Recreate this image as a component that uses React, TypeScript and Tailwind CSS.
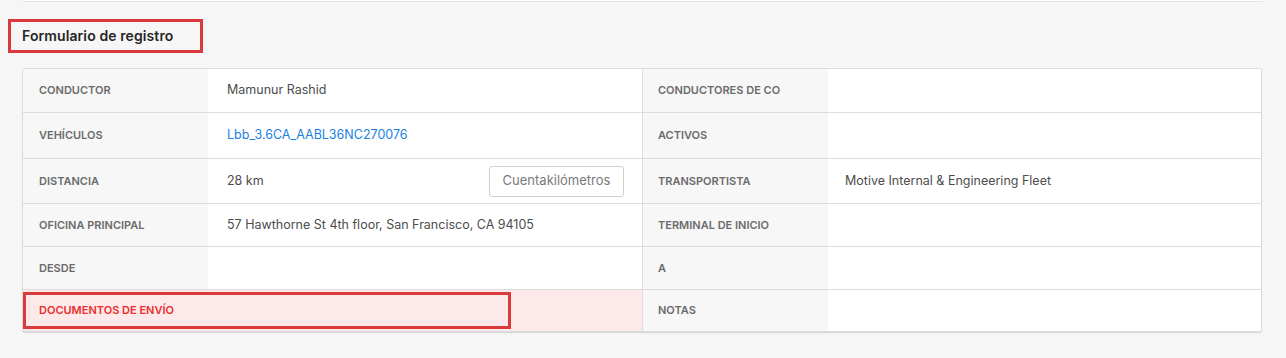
import React from "react";

type Row = {
  h: string;
  l1: string;
  v1?: React.ReactNode;
  l2: string;
  v2?: React.ReactNode;
  danger?: boolean;
};

const rows: Row[] = [
  { h: "h-[44px]", l1: "Conductor", v1: "Mamunur Rashid", l2: "Conductores de co" },
  {
    h: "h-[46px]",
    l1: "Vehículos",
    v1: <span className="text-[#1a7fe2]">Lbb_3.6CA_AABL36NC270076</span>,
    l2: "Activos",
  },
  {
    h: "h-[45px]",
    l1: "Distancia",
    v1: "28 km",
    l2: "Transportista",
    v2: "Motive Internal & Engineering Fleet",
  },
  {
    h: "h-[43px]",
    l1: "Oficina principal",
    v1: "57 Hawthorne St 4th floor, San Francisco, CA 94105",
    l2: "Terminal de inicio",
  },
  { h: "h-[43px]", l1: "Desde", l2: "A" },
  { h: "h-[41px]", l1: "Documentos de envío", l2: "Notas", danger: true },
];

export default function App() {
  return (
    <div
      className="w-[1286px] h-[358px] bg-[#f6f6f6] overflow-hidden"
      style={{ fontFamily: "Inter, 'Noto Sans', sans-serif" }}
    >
      <div className="mx-[22px] w-[1240px] h-[2px] bg-white border-b border-[#e2e2e2]" />
      <div className="mt-[17px] ml-[8px] w-[195px] h-[34px] border-[3px] border-[#d93a3c] flex items-center pl-[11px]">
        <span className="text-[14px] font-semibold text-[#262626] tracking-[0.1px] -mt-[1px]">
          Formulario de registro
        </span>
      </div>
      <div className="mt-[15px] ml-[22px] w-[1240px] border border-[#dcdcdc] rounded-[3px] bg-white shadow-[0_1px_1px_rgba(0,0,0,0.14)] overflow-hidden">
        {rows.map((r, i) => (
          <div
            key={i}
            className={`grid grid-cols-[185px_434px_186px_1fr] ${r.h} ${
              i < rows.length - 1 ? "border-b border-[#dddddd]" : ""
            }`}
          >
            <div
              className={`relative flex items-center pl-[16px] text-[11px] font-semibold uppercase ${
                r.danger ? "bg-[#fde9e9] text-[#e8302f]" : "bg-[#f7f7f7] text-[#6b6b6b]"
              }`}
            >
              {r.l1}
              {r.danger && (
                <div className="absolute left-0 top-[2px] w-[488px] h-[37px] border-[3px] border-[#d93a3c] z-10" />
              )}
            </div>
            <div
              className={`flex items-center justify-between pl-[19px] pr-[18px] text-[12.5px] text-[#4d4d4d] ${
                r.danger ? "bg-[#fde9e9]" : "bg-white"
              }`}
            >
              <span>{r.v1}</span>
              {i === 2 && (
                <button className="h-[31px] w-[135px] border border-[#cfcfcf] rounded-[3px] bg-white text-[13px] text-[#7a7a7a]">
                  Cuentakilómetros
                </button>
              )}
            </div>
            <div className="flex items-center pl-[15px] border-l border-[#dddddd] bg-[#f7f7f7] text-[11px] font-semibold uppercase text-[#6b6b6b]">
              {r.l2}
            </div>
            <div className="flex items-center pl-[17px] text-[12.5px] text-[#4d4d4d] bg-white">
              {r.v2}
            </div>
          </div>
        ))}
      </div>
    </div>
  );
}
